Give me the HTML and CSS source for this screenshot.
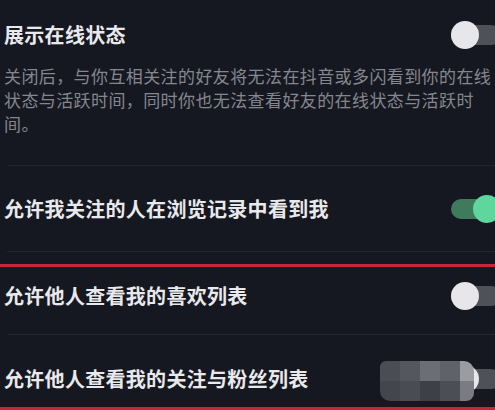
FILE: index.html
```html
<!DOCTYPE html>
<html lang="zh-CN">
<head>
    <meta charset="UTF-8">
    <meta name="viewport" content="width=device-width, initial-scale=1.0">
    <title>隐私设置</title>
    <link rel="stylesheet" href="styles.css">
</head>
<body>
    <div class="settings">
        <div class="section first">
            <div class="row">
                <span class="title">展示在线状态</span>
                <div class="toggle"><div class="knob"></div></div>
            </div>
            <p class="desc">关闭后，与你互相关注的好友将无法在抖音或多闪看到你的在线状态与活跃时间，同时你也无法查看好友的在线状态与活跃时间。</p>
        </div>
        <div class="divider"></div>

        <div class="row second">
            <span class="title">允许我关注的人在浏览记录中看到我</span>
            <div class="toggle on"><div class="knob"></div></div>
        </div>
        <div class="divider"></div>

        <div class="red-line top"></div>

        <div class="row third">
            <span class="title">允许他人查看我的喜欢列表</span>
            <div class="toggle"><div class="knob"></div></div>
        </div>
        <div class="divider"></div>

        <div class="row fourth">
            <span class="title">允许他人查看我的关注与粉丝列表</span>
            <div class="toggle"><div class="knob"></div></div>
            <!-- pixelated blur over the switch -->
            <div class="mosaic">
                <span class="m1"></span><span class="m2"></span><span class="m3"></span><span class="m4"></span><span class="m5"></span>
                <span class="m6"></span><span class="m7"></span><span class="m8"></span><span class="m9"></span><span class="m10"></span>
            </div>
        </div>

        <div class="red-line bottom"></div>
    </div>
</body>
</html>
```

FILE: styles.css
```css
body {
    margin: 0;
    padding: 0;
    background-color: #161821;
    font-family: "Noto Sans CJK SC", "Noto Sans", sans-serif;
    overflow: hidden;
    height: 410px;
}

.settings {
    display: flex;
    flex-direction: column;
}

.section.first {
    padding: 21px 0 29px 4px;
}

.row {
    display: flex;
    align-items: center;
    position: relative;
    padding-left: 4px;
}

.section.first .row {
    padding-left: 0;
}

.title {
    font-size: 20px;
    line-height: 28px;
    font-weight: 700;
    color: #e9e9ec;
    letter-spacing: 0.3px;
}

.desc {
    margin: 15px 0 0;
    font-size: 17px;
    line-height: 24px;
    color: #85878e;
    letter-spacing: 0.4px;
    padding-right: 2px;
}

.divider {
    height: 1px;
    margin-left: 7px;
    background-color: #22242e;
}

.row.second {
    padding-top: 29px;
    padding-bottom: 28px;
}

.row.third {
    padding-top: 15px;
    padding-bottom: 24px;
}

.row.fourth {
    padding-top: 30px;
    padding-bottom: 14px;
}

.red-line {
    background-color: #c92536;
}

.red-line.top {
    margin-top: 12px;
    height: 3px;
}

.red-line.bottom {
    height: 4px;
}

.toggle {
    margin-left: auto;
    margin-right: -6px;
    width: 50px;
    height: 20px;
    border-radius: 10px;
    background-color: #4f5159;
    display: flex;
    align-items: center;
}

.knob {
    width: 28px;
    height: 28px;
    border-radius: 50%;
    background-color: #e6e6eb;
    flex-shrink: 0;
}

.toggle.on {
    background-color: #3e7a5b;
    justify-content: flex-end;
}

.toggle.on .knob {
    background-color: #5fd69d;
}

.mosaic {
    position: absolute;
    left: 380px;
    top: 26px;
    display: grid;
    grid-template-columns: 20px 20px 20px 20px 14px;
    grid-template-rows: 20px 20px;
    border-radius: 6px 10px 8px 10px;
    overflow: hidden;
}

.m1 { background-color: #4b4d55; }
.m2 { background-color: #55575e; }
.m3 { background-color: #6c6e75; }
.m4 { background-color: #606269; }
.m5 { background-color: #9a9ca2; }
.m6 { background-color: #44464d; }
.m7 { background-color: #4a4c53; }
.m8 { background-color: #3e4047; }
.m9 { background-color: #4c4e55; }
.m10 { background-color: #7a7c82; }
```
